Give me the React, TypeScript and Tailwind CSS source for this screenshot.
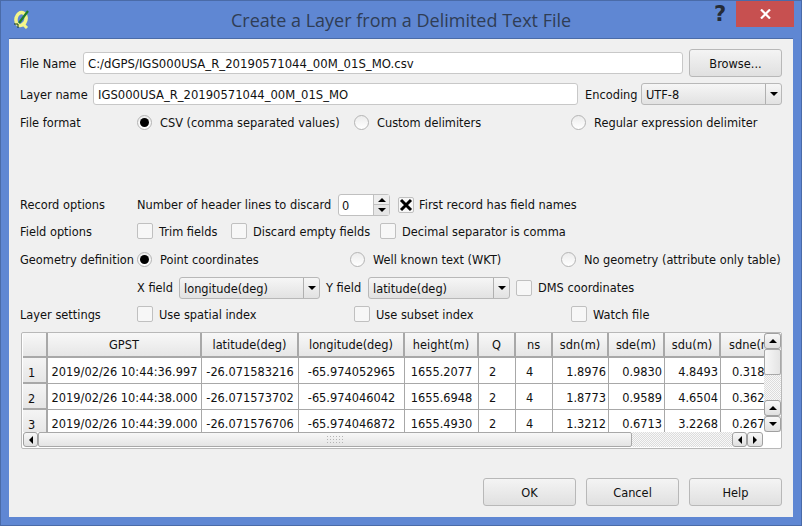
import React from 'react';

const rows = [
    ['1', '2019/02/26 10:44:36.997', '-26.071583216', '-65.974052965', '1655.2077', '2', '4', '1.8976', '0.9830', '4.8493', '0.318'],
    ['2', '2019/02/26 10:44:38.000', '-26.071573702', '-65.974046042', '1655.6948', '2', '4', '1.8773', '0.9589', '4.6504', '0.362'],
    ['3', '2019/02/26 10:44:39.000', '-26.071576706', '-65.974046872', '1655.4930', '2', '4', '1.3212', '0.6713', '3.2268', '0.267'],
];
const headers = ['', 'GPST', 'latitude(deg)', 'longitude(deg)', 'height(m)', 'Q', 'ns', 'sdn(m)', 'sde(m)', 'sdu(m)', 'sdne(m)'];

const cellAlign = (i: number) => {
    if (i === 10) return 'pl-[11px]';
    if (i >= 7) return 'text-right pr-[2px]';
    if (i === 5 || i === 6) return 'pl-[10px]';
    return 'text-center';
};

// text sits a little low against its control, as in the Qt dialog
const T = ({ children, className = 'pt-[4px]' }: { children: React.ReactNode; className?: string }) => (
    <span className={className}>{children}</span>
);

const Radio = ({ on = false }: { on?: boolean }) => (
    <span className="w-[15px] h-[15px] shrink-0 rounded-full border border-[#b4b4b4] bg-gradient-to-b from-[#ececec] to-white flex items-center justify-center">
        {on && <span className="w-[9px] h-[9px] rounded-full bg-black" />}
    </span>
);

const Check = ({ on = false }: { on?: boolean }) => (
    <span className="w-[16px] h-[16px] shrink-0 rounded-[2px] border border-[#c0c0c0] bg-[#f7f7f7] flex items-center justify-center">
        {on && (
            <svg width="14" height="14" viewBox="0 0 14 14">
                <path d="M2 2 L12 12 M12 2 L2 12" stroke="#000" strokeWidth="3" />
            </svg>
        )}
    </span>
);

const Arrow = ({ dir }: { dir: 'up' | 'down' | 'left' | 'right' }) => {
    const pts = {
        up: '0,4 8,4 4,0',
        down: '0,0 8,0 4,4',
        left: '4,0 4,8 0,4',
        right: '0,0 0,8 4,4',
    }[dir];
    const w = dir === 'up' || dir === 'down' ? 8 : 4;
    const h = dir === 'up' || dir === 'down' ? 4 : 8;
    return (
        <svg width={w} height={h} viewBox={`0 0 ${w} ${h}`}>
            <polygon points={pts} fill="#000" />
        </svg>
    );
};

const Combo = ({ text, className }: { text: string; className: string }) => (
    <div className={`h-[22px] flex rounded-[3px] border border-[#b8b8b8] bg-gradient-to-b from-[#f6f6f6] to-[#e2e2e2] ${className}`}>
        <span className="flex-1 pl-[4px] leading-[23px] overflow-hidden">{text}</span>
        <span className="w-[16px] border-l border-[#b0b0b0] flex items-center justify-center">
            <Arrow dir="down" />
        </span>
    </div>
);

const Button = ({ label, className = '' }: { label: string; className?: string }) => (
    <div className={`w-[93px] h-[28px] pt-[3px] rounded-[3px] border border-[#b8b8b8] bg-gradient-to-b from-[#f4f4f4] to-[#e0e0e0] flex items-center justify-center ${className}`}>
        {label}
    </div>
);

const ScrollBtn = ({ dir, className = '' }: { dir: 'up' | 'down' | 'left' | 'right'; className?: string }) => (
    <div className={`shrink-0 rounded-[3px] border border-[#a0a0a0] bg-gradient-to-b from-[#f8f8f8] to-[#e0e0e0] flex items-center justify-center ${className}`}>
        <Arrow dir={dir} />
    </div>
);

const Label = ({ children, className = 'pt-[4px]' }: { children?: React.ReactNode; className?: string }) => (
    <span className={`w-[117px] shrink-0 ${className}`}>{children}</span>
);

export default function App() {
    return (
        <div className="w-[802px] h-[526px] bg-[#5f87d3] border border-[#4a6ba8] flex flex-col font-['DejaVu_Sans',sans-serif] text-[11.4px] text-[#101010] overflow-hidden whitespace-nowrap">
            {/* Title bar */}
            <div className="h-[37px] shrink-0 flex items-start">
                <div className="w-[28px] pl-[12px] pt-[8px]">
                    <svg width="18" height="20" viewBox="0 0 18 20">
                        <ellipse cx="8" cy="10" rx="5" ry="6.5" fill="none" stroke="#f3f58a" strokeWidth="3.5" transform="rotate(15 8 10)" />
                        <path d="M9 14 L14 19" stroke="#f3f58a" strokeWidth="3" />
                        <path d="M6 14 L15 2" stroke="#1f7a2a" strokeWidth="2.2" />
                        <path d="M1 15 L5 15 L5 19" stroke="#153a18" strokeWidth="1" fill="none" />
                    </svg>
                </div>
                <div className="flex-1 pt-[7px] pl-[202px] font-['Open_Sans',sans-serif] text-[18px] leading-[24px] text-[#2f3d55]">
                    Create a Layer from a Delimited Text File
                </div>
                <div className="w-[22px] pt-[1px] font-bold text-[21px] leading-[24px] text-[#252b36]">?</div>
                <div className="w-[58px] h-[26px] mr-[7px] bg-[#c75050] flex items-center justify-center">
                    <svg width="11" height="10" viewBox="0 0 11 10">
                        <path d="M1 0.5 L10 9.5 M10 0.5 L1 9.5" stroke="#fff" strokeWidth="2.2" />
                    </svg>
                </div>
            </div>

            {/* Client area */}
            <div className="mx-[8px] h-[479px] bg-[#f0f0f0] border-t border-[#4a6ba8] pl-[11px] pr-[10px] flex flex-col">
                <div className="h-[28px] mt-[10px] flex items-center">
                    <span className="w-[63px] shrink-0 pt-[4px]">File Name</span>
                    <div className="w-[600px] h-[22px] rounded-[3px] border border-[#c8c8c8] bg-white pl-[4px] text-[11.7px] leading-[22px]">C:/dGPS/IGS000USA_R_20190571044_00M_01S_MO.csv</div>
                    <Button label="Browse..." className="ml-[6px] border-[#8a8a8a]" />
                </div>
                <div className="h-[22px] mt-[6px] flex items-center">
                    <span className="w-[73px] shrink-0 pt-[4px]">Layer name</span>
                    <div className="w-[485px] h-[22px] rounded-[3px] border border-[#c8c8c8] bg-white pl-[4px] text-[11.6px] leading-[22px]">IGS000USA_R_20190571044_00M_01S_MO</div>
                    <span className="w-[63px] pl-[7px] pt-[4px] shrink-0">Encoding</span>
                    <Combo text="UTF-8" className="w-[141px]" />
                </div>
                <div className="h-[16px] mt-[9px] flex items-center">
                    <Label>File format</Label>
                    <div className="w-[217px] flex items-center gap-[8px]"><Radio on /><T>CSV (comma separated values)</T></div>
                    <div className="w-[217px] flex items-center gap-[8px]"><Radio /><T>Custom delimiters</T></div>
                    <div className="flex items-center gap-[8px]"><Radio /><T>Regular expression delimiter</T></div>
                </div>
                <div className="h-[22px] mt-[64px] flex items-center">
                    <Label className="pt-[2px]">Record options</Label>
                    <span className="w-[201px] shrink-0 pt-[2px]">Number of header lines to discard</span>
                    <div className="w-[52px] h-[22px] rounded-[3px] border border-[#c0c0c0] bg-white flex">
                        <span className="flex-1 pl-[3px] leading-[23px]">0</span>
                        <div className="w-[16px] flex flex-col border-l border-[#c0c0c0]">
                            <span className="h-[10px] border-b border-[#c0c0c0] bg-[#eeeeee] flex items-center justify-center"><Arrow dir="up" /></span>
                            <span className="flex-1 bg-[#e6e6e6] flex items-center justify-center"><Arrow dir="down" /></span>
                        </div>
                    </div>
                    <div className="ml-[8px] flex items-center gap-[5px]"><Check on /><T className="pt-[2px]">First record has field names</T></div>
                </div>
                <div className="h-[16px] mt-[7px] flex items-center">
                    <Label>Field options</Label>
                    <div className="w-[94px] flex items-center gap-[6px]"><Check /><T>Trim fields</T></div>
                    <div className="w-[149px] flex items-center gap-[6px]"><Check /><T>Discard empty fields</T></div>
                    <div className="flex items-center gap-[6px]"><Check /><T>Decimal separator is comma</T></div>
                </div>
                <div className="h-[16px] mt-[12px] flex items-center">
                    <Label>Geometry definition</Label>
                    <div className="w-[213px] flex items-center gap-[8px]"><Radio on /><T>Point coordinates</T></div>
                    <div className="w-[211px] flex items-center gap-[8px]"><Radio /><T>Well known text (WKT)</T></div>
                    <div className="flex items-center gap-[8px]"><Radio /><T>No geometry (attribute only table)</T></div>
                </div>
                <div className="h-[22px] mt-[10px] flex items-center">
                    <Label />
                    <span className="w-[42px] shrink-0 pt-[2px]">X field</span>
                    <Combo text="longitude(deg)" className="w-[141px]" />
                    <span className="w-[48px] pl-[6px] pt-[2px] shrink-0">Y field</span>
                    <Combo text="latitude(deg)" className="w-[142px]" />
                    <div className="ml-[6px] flex items-center gap-[6px]"><Check /><T className="pt-[2px]">DMS coordinates</T></div>
                </div>
                <div className="h-[16px] mt-[7px] flex items-center">
                    <Label>Layer settings</Label>
                    <div className="w-[217px] flex items-center gap-[6px]"><Check /><T>Use spatial index</T></div>
                    <div className="w-[217px] flex items-center gap-[6px]"><Check /><T>Use subset index</T></div>
                    <div className="flex items-center gap-[6px]"><Check /><T>Watch file</T></div>
                </div>

                {/* Sample data table */}
                <div className="w-[761px] h-[117px] ml-[1px] mt-[10px] rounded-[2px] border border-[#b8b8b8] bg-white pl-[1px] flex flex-col">
                    <div className="h-[99px] shrink-0 flex">
                        <div className="w-[741px] overflow-hidden">
                            <div className="w-[770px] grid grid-cols-[25px_154px_97px_106px_74px_37px_37px_56px_56px_56px_72px] grid-rows-[25px_26px_26px_26px]">
                                {headers.map((h, i) => (
                                    <div key={i} className={`border-r-2 border-b-2 border-[#a8a8a8] bg-gradient-to-b from-[#f8f8f8] to-[#e6e6e6] pt-[3px] flex items-center overflow-hidden ${i === 10 ? 'pl-[8px]' : 'justify-center'}`}>{h}</div>
                                ))}
                                {rows.map(row =>
                                    row.map((c, i) => (
                                        <div
                                            key={i}
                                            className={
                                                i === 0
                                                    ? 'border-r-2 border-b-2 border-[#a8a8a8] bg-gradient-to-b from-[#f4f4f4] to-[#e6e6e6] pl-[5px] leading-[31px] overflow-hidden'
                                                    : `border-r border-b border-[#a8a8a8] leading-[29px] overflow-hidden ${cellAlign(i)}`
                                            }
                                        >
                                            {c}
                                        </div>
                                    )),
                                )}
                            </div>
                        </div>
                        <div className="w-[17px] flex flex-col bg-[repeating-conic-gradient(#dcdcdc_0_25%,#f8f8f8_0_50%)] bg-[length:2px_2px]">
                            <ScrollBtn dir="up" className="h-[16px]" />
                            <div className="h-[26px] rounded-[2px] border border-[#a8a8a8] bg-gradient-to-r from-[#f8f8f8] to-[#e4e4e4]" />
                            <div className="flex-1" />
                            <ScrollBtn dir="up" className="h-[16px]" />
                            <ScrollBtn dir="down" className="h-[16px]" />
                        </div>
                    </div>
                    <div className="h-[15px] flex items-stretch">
                        <ScrollBtn dir="left" className="w-[15px]" />
                        <div className="w-[594px] relative rounded-[2px] border border-[#a8a8a8] bg-gradient-to-b from-[#f8f8f8] to-[#e4e4e4]">
                            <div className="absolute left-[287px] top-[2px] w-[18px] h-[10px] bg-[radial-gradient(#b4b4b4_1px,transparent_1px)] bg-[length:3px_3px]" />
                        </div>
                        <div className="flex-1 bg-[repeating-conic-gradient(#dcdcdc_0_25%,#f8f8f8_0_50%)] bg-[length:2px_2px]" />
                        <ScrollBtn dir="left" className="w-[15px]" />
                        <ScrollBtn dir="right" className="w-[16px]" />
                        <div className="w-[18px] shrink-0" />
                    </div>
                </div>

                {/* Dialog buttons */}
                <div className="mt-[29px] flex justify-end gap-[10px] w-[762px]">
                    <Button label="OK" />
                    <Button label="Cancel" />
                    <Button label="Help" />
                </div>
            </div>
        </div>
    );
}
